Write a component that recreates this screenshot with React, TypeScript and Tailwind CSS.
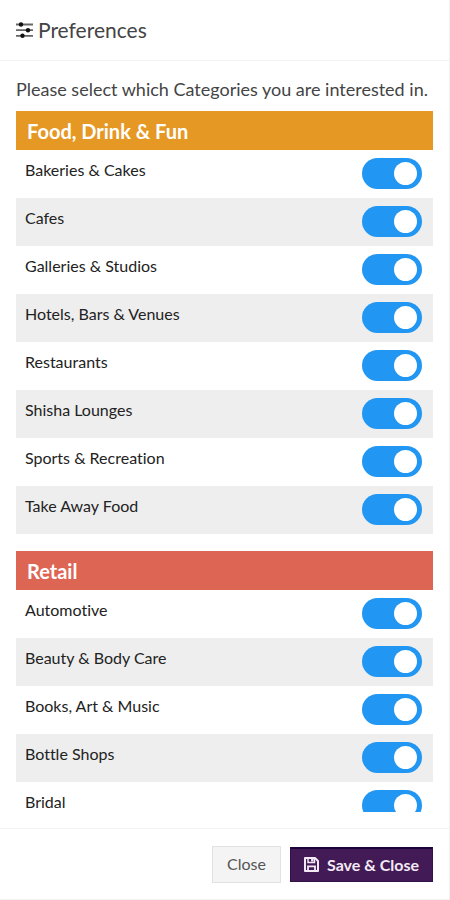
import React, { useState } from 'react';

type Group = { title: string; color: string; items: string[] };

const GROUPS: Group[] = [
  {
    title: 'Food, Drink & Fun',
    color: 'bg-[#e69824]',
    items: [
      'Bakeries & Cakes',
      'Cafes',
      'Galleries & Studios',
      'Hotels, Bars & Venues',
      'Restaurants',
      'Shisha Lounges',
      'Sports & Recreation',
      'Take Away Food',
    ],
  },
  {
    title: 'Retail',
    color: 'bg-[#dd6554]',
    items: ['Automotive', 'Beauty & Body Care', 'Books, Art & Music', 'Bottle Shops', 'Bridal'],
  },
];

const SlidersIcon = () => (
  <svg width="18" height="16" viewBox="0 0 18 16" aria-hidden="true">
    <path d="M0 2.5h17M0 8.2h17M0 13.8h17" stroke="#666" strokeWidth="1.8" />
    <circle cx="5" cy="2.5" r="2.2" fill="#111" />
    <circle cx="12" cy="8.2" r="2.2" fill="#111" />
    <circle cx="6.5" cy="13.8" r="2.2" fill="#111" />
  </svg>
);

const SaveIcon = () => (
  <svg width="15" height="15" viewBox="0 0 15 15" fill="none" stroke="#f3eaf5" aria-hidden="true">
    <path d="M1 1h10L14 4v10H1z" strokeWidth="2" strokeLinejoin="round" />
    <path d="M4 1v4.4h6.5V1" strokeWidth="1.5" />
    <path d="M8.3 1.5v3" strokeWidth="2.4" />
    <path d="M4 14V9.3h7V14" strokeWidth="1.8" />
  </svg>
);

const CategoryRow = ({ name }: { name: string }) => {
  const [on, setOn] = useState(true);
  return (
    <li className="even:bg-[#eeeeee]">
      <label className="flex h-12 cursor-pointer items-start justify-between pl-[9px] pr-[11px]">
        <span className="pt-2 text-[16px] leading-6 text-[#222222]">{name}</span>
        <input
          type="checkbox"
          checked={on}
          onChange={(e) => setOn(e.target.checked)}
          className="mt-2 h-[31px] w-[60px] shrink-0 cursor-pointer appearance-none rounded-full bg-gray-300 p-1 transition-colors before:block before:size-[23px] before:rounded-full before:bg-white before:transition-transform checked:bg-[#2196f3] checked:before:translate-x-7"
        />
      </label>
    </li>
  );
};

export default function App() {
  return (
    <div className="flex h-screen flex-col border-r border-b border-[#f2f2f2] bg-white font-['Lato','Liberation_Sans',sans-serif] [font-variant-ligatures:none]">
      <header className="flex h-[61px] shrink-0 items-center gap-1 border-b border-[#f2f2f2] px-4">
        <SlidersIcon />
        <h1 className="text-[21px] leading-6 text-[#444444]">Preferences</h1>
      </header>

      <main className="min-h-0 flex-1 px-4 pb-4">
        <div className="h-full overflow-y-auto pt-4 [scrollbar-width:none]">
          <p className="mb-[10px] text-[18px] leading-6 text-[#444444]">
            Please select which Categories you are interested in.
          </p>
          {GROUPS.map((group) => (
            <section key={group.title} className="mb-[17px] last:mb-0">
              <h2 className={`h-[39px] px-[11px] text-[20px] font-bold leading-10 text-white ${group.color}`}>
                {group.title}
              </h2>
              <ul>
                {group.items.map((item) => (
                  <CategoryRow key={item} name={item} />
                ))}
              </ul>
            </section>
          ))}
        </div>
      </main>

      <footer className="flex h-[71px] shrink-0 items-center justify-end gap-[9px] border-t border-[#f2f2f2] px-4">
        <button type="button" className="h-[37px] border border-[#e2e2e2] bg-[#f4f4f4] px-[14px] text-[16px] text-[#555555]">
          Close
        </button>
        <button
          type="button"
          className="flex h-[35px] items-center gap-2 border border-t-2 border-[#35114a] border-t-[#1d0438] bg-[#421b56] px-[13px] text-[16px] font-bold text-[#f3eaf5]"
        >
          <SaveIcon />
          Save &amp; Close
        </button>
      </footer>
    </div>
  );
}
